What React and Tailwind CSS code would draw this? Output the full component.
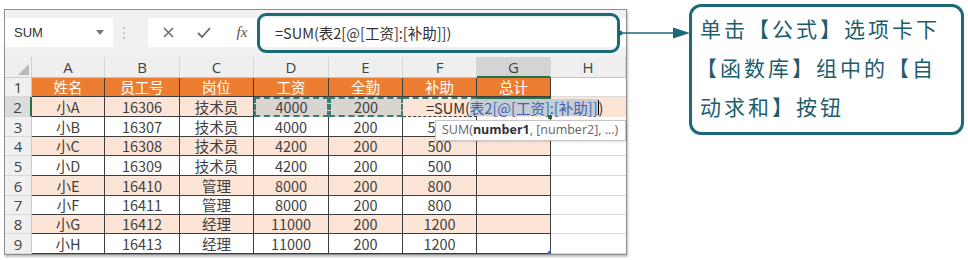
import React from "react";

const COLS = "grid grid-cols-[27px_73px_75px_74px_75px_74px_74px_74px_75px] grid-rows-[21px_19px_20px_20px_19px_20px_20px_19px_19px_20px]";

const data = [
  ["姓名", "员工号", "岗位", "工资", "全勤", "补助", "总计"],
  ["小A", "16306", "技术员", "4000", "200", "", ""],
  ["小B", "16307", "技术员", "4000", "200", "500", ""],
  ["小C", "16308", "技术员", "4200", "200", "500", ""],
  ["小D", "16309", "技术员", "4200", "200", "500", ""],
  ["小E", "16410", "管理", "8000", "200", "800", ""],
  ["小F", "16411", "管理", "8000", "200", "800", ""],
  ["小G", "16412", "经理", "11000", "200", "1200", ""],
  ["小H", "16413", "经理", "11000", "200", "1200", ""],
];

const letters = ["A", "B", "C", "D", "E", "F", "G", "H"];

function cellClass(r, c) {
  const base = "flex items-center justify-center text-[14.5px] leading-[18px] whitespace-nowrap";
  if (r === 0) {
    return base + " bg-[#ed7d31] text-white border-r border-b border-[#3d3d3d]";
  }
  const peach = r % 2 === 1;
  if (r === 1) {
    if (c === 3 || c === 4) {
      return base + " bg-[#dbd5d2] text-[#3f3f3f] border-2 border-dashed border-[#3a7d72]";
    }
    if (c === 5) {
      return base + " bg-[#fce4d6] text-[#3f3f3f] border-t-2 border-dashed border-t-[#3a7d72] border-b border-b-[#3d3d3d]";
    }
    if (c === 6) {
      return base + " bg-[#fce4d6] border-t-2 border-t-[#217346]";
    }
  }
  return (
    base +
    (peach ? " bg-[#fce4d6]" : " bg-white") +
    " text-[#3f3f3f] border-r border-b border-[#3d3d3d]"
  );
}

export default function App() {
  return (
    <div className="relative w-[968px] h-[260px] bg-white overflow-hidden flex items-start font-['Noto_Sans_CJK_SC',sans-serif]">
      {/* Excel frame */}
      <div className="ml-[4px] mt-[9px] w-[623px] border border-[#8f8f8f] shadow-[1px_2px_2px_rgba(0,0,0,0.25)] flex flex-col">
        {/* toolbar */}
        <div className="h-[47px] bg-[#f1f1f1] flex items-start pt-[8px]">
          <div className="w-[108px] h-[29px] bg-white flex items-center justify-between pl-[9px] pr-[9px] text-[13px] text-[#333] font-['Liberation_Sans',sans-serif]">
            <span>SUM</span>
            <svg width="8" height="5" viewBox="0 0 8 5">
              <polygon points="0,0 8,0 4,5" fill="#7a7a7a" />
            </svg>
          </div>
          <div className="w-[35px] h-[29px] flex flex-col items-start justify-center pl-[10px] gap-[3px]">
            <span className="w-[2px] h-[2px] bg-[#c4c4c4]" />
            <span className="w-[2px] h-[2px] bg-[#c4c4c4]" />
            <span className="w-[2px] h-[2px] bg-[#c4c4c4]" />
          </div>
          <div className="flex-1 h-[29px] bg-white flex items-center">
            <div className="w-[40px] flex justify-center">
              <svg width="11" height="11" viewBox="0 0 11 11">
                <path d="M1 1 L10 10 M10 1 L1 10" stroke="#6a6a6a" strokeWidth="1.5" />
              </svg>
            </div>
            <div className="w-[32px] flex justify-center">
              <svg width="14" height="11" viewBox="0 0 14 11">
                <path d="M1 6 L5 10 L13 1" stroke="#6a6a6a" strokeWidth="1.8" fill="none" />
              </svg>
            </div>
            <div className="w-[44px] flex justify-center text-[15px] italic text-[#555] font-['Liberation_Serif',serif]">
              fx
            </div>
            <div className="pl-[11px] text-[14.5px] text-[#333] whitespace-nowrap">
              =SUM(表2[@[工资]:[补助]])
            </div>
          </div>
        </div>

        {/* sheet */}
        <div className={COLS}>
          <div className="relative bg-[#efefef] border-r border-b border-[#cfcfcf]">
            <svg className="absolute right-[2px] bottom-[2px]" width="11" height="11" viewBox="0 0 11 11">
              <polygon points="11,0 11,11 0,11" fill="#b9b9b9" />
            </svg>
          </div>
          {letters.map((l, i) => (
            <div
              key={l}
              className={
                "flex items-center justify-center text-[15px] leading-[18px] text-[#444] font-['Open_Sans',sans-serif] border-r border-[#d6d6d6] " +
                (i === 6
                  ? "bg-[#d4d4d4] border-b-2 border-b-[#217346]"
                  : "bg-[#efefef] border-b border-b-[#c4c4c4]")
              }
            >
              {l}
            </div>
          ))}

          {data.map((row, r) => (
            <React.Fragment key={r}>
              <div
                className={
                  "flex items-center justify-center text-[15px] leading-[18px] text-[#444] font-['Open_Sans',sans-serif] border-b border-b-[#d8d8d8] " +
                  (r === 1
                    ? "bg-[#dcdcdc] border-r-2 border-r-[#217346]"
                    : "bg-[#f0f0f0] border-r border-r-[#c8c8c8]")
                }
              >
                {r + 1}
              </div>
              {row.map((v, c) => (
                <div key={c} className={cellClass(r, c)}>
                  {v}
                </div>
              ))}
              <div
                className={
                  r === 1
                    ? "bg-[#fce4d6]"
                    : "bg-white border-b border-[#dadada]"
                }
              />
            </React.Fragment>
          ))}
        </div>
      </div>

      {/* callout */}
      <div className="ml-[62px] mt-[4px] w-[275px] h-[131px] border-[3px] border-[#1b6a77] rounded-[12px] bg-white pl-[8px] pt-[2px] text-[21px] leading-[39px] tracking-[3px] text-[#1d5d6c] whitespace-nowrap">
        <div>单击【公式】选项卡下</div>
        <div className="-ml-[4px]">【函数库】组中的【自</div>
        <div>动求和】按钮</div>
      </div>

      {/* formula bar highlight */}
      <div className="absolute left-[257px] top-[13px] w-[363px] h-[40px] border-[3px] border-[#1b6a77] rounded-[9px]" />

      {/* arrow */}
      <svg className="absolute left-[614px] top-[25px]" width="78" height="16" viewBox="614 25 78 16">
        <circle cx="620" cy="33" r="2.5" fill="#1b6a77" />
        <line x1="620" y1="33" x2="676" y2="33" stroke="#1b6a77" strokeWidth="1.6" />
        <polygon points="673,27.5 690,33 673,38.5" fill="#1b6a77" />
      </svg>

      {/* in-cell editor overlay */}
      <div className="absolute left-[418px] top-[99px] w-[203px] h-[17px] bg-[#fce4d6] flex items-center pl-[8px] text-[14.5px] leading-[17px] text-[#333] whitespace-nowrap">
        <span>=SUM(</span>
        <span className="bg-[#c7cdd7] text-[#3c63b3]">表2[@[工资]:[补助]]</span>
        <span className="w-[1px] h-[15px] bg-black" />
        <span>)</span>
      </div>

      {/* fill handle */}
      <div className="absolute left-[548px] top-[115px] w-[4px] h-[4px] bg-[#217346]" />

      {/* tooltip */}
      <div className="absolute left-[435px] top-[120px] w-[191px] h-[21px] bg-white border border-[#c6c6c6] shadow-[1px_1px_2px_rgba(0,0,0,0.12)] flex items-center pl-[6px] text-[12.5px] text-[#666] whitespace-nowrap font-['Open_Sans',sans-serif]">
        SUM(<span className="font-bold text-[#333]">number1</span>, [number2], ...)
      </div>

      {/* table resize handle */}
      <svg className="absolute left-[546px] top-[249px]" width="5" height="5" viewBox="0 0 5 5">
        <polygon points="5,0 5,5 0,5" fill="#3f63b0" />
      </svg>
    </div>
  );
}
